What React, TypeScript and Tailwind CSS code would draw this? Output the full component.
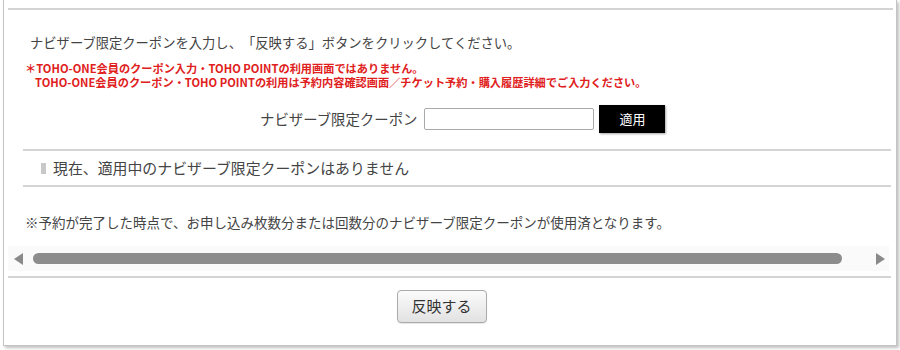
import React from "react";

export default function App() {
  return (
    <div
      className="w-[900px] h-[350px] bg-white text-[#333] [text-spacing-trim:space-all]"
      style={{ fontFamily: '"Noto Sans CJK JP", "Noto Sans", sans-serif' }}
    >
      <div className="ml-[3px] w-[894px] h-[346px] border-x border-b border-[#c4c4c4] shadow-[2px_2px_3px_rgba(0,0,0,0.25)] pl-[4px] pr-[3px] pt-[8px] flex flex-col">
        <div className="h-[2px] bg-[#d4d4d4]" />

        <p className="mt-[23px] pl-[22px] text-[13.3px] leading-[20px] text-[#444]">
          ナビザーブ限定クーポンを入力し、「反映する」ボタンをクリックしてください。
        </p>

        <div className="mt-[8px] pl-[17px] text-[11.2px] leading-[14px] font-bold text-[#e02020]">
          <div>＊TOHO-ONE会員のクーポン入力・TOHO POINTの利用画面ではありません。</div>
          <div className="pl-[10px]">
            TOHO-ONE会員のクーポン・TOHO POINTの利用は予約内容確認画面／チケット予約・購入履歴詳細でご入力ください。
          </div>
        </div>

        <div className="mt-[16px] flex items-center pl-[252px] h-[28px]">
          <span className="text-[14.4px] text-[#444] leading-none">ナビザーブ限定クーポン</span>
          <input
            type="text"
            className="ml-[7px] w-[170px] h-[22px] border border-[#aaa] rounded-[2px] bg-white outline-none"
          />
          <button className="ml-[5px] w-[66px] h-[28px] bg-black text-white text-[13px] shadow-[1px_1px_2px_rgba(0,0,0,0.35)]">
            適用
          </button>
        </div>

        <div className="ml-[15px] mr-[2px]">
          <div className="mt-[16px] h-[2px] bg-[#d4d4d4]" />
          <div className="h-[34px] flex items-center pl-[18px]">
            <span className="w-[5px] h-[11px] bg-[#c8c8c8]" />
            <span className="ml-[7px] text-[14.9px] text-[#444] leading-none">
              現在、適用中のナビザーブ限定クーポンはありません
            </span>
          </div>
          <div className="h-[2px] bg-[#d4d4d4]" />
        </div>

        <p className="mt-[25px] pl-[17px] text-[13.5px] leading-[20px] text-[#444]">
          ※予約が完了した時点で、お申し込み枚数分または回数分のナビザーブ限定クーポンが使用済となります。
        </p>

        <div className="mt-[14px] h-[25px] bg-[#fafafa] flex items-center mr-[4px]">
          <svg width="9" height="12" viewBox="0 0 9 12" className="ml-[6px]">
            <polygon points="9,0 9,12 0,6" fill="#8a8a8a" />
          </svg>
          <div className="ml-[10px] w-[809px] h-[11px] rounded-full bg-[#8c8c8c]" />
          <svg width="9" height="12" viewBox="0 0 9 12" className="ml-[34px]">
            <polygon points="0,0 0,12 9,6" fill="#8a8a8a" />
          </svg>
        </div>

        <div className="mt-[5px] h-[2px] bg-[#d4d4d4] mr-[2px]" />

        <div className="flex justify-center mt-[12px] pr-[18px]">
          <button className="w-[90px] h-[33px] border border-[#aaa] rounded-[4px] bg-gradient-to-b from-[#fbfbfb] to-[#e2e2e2] text-[15px] text-[#333] shadow-[0_1px_1px_rgba(0,0,0,0.1)]">
            反映する
          </button>
        </div>
      </div>
    </div>
  );
}
